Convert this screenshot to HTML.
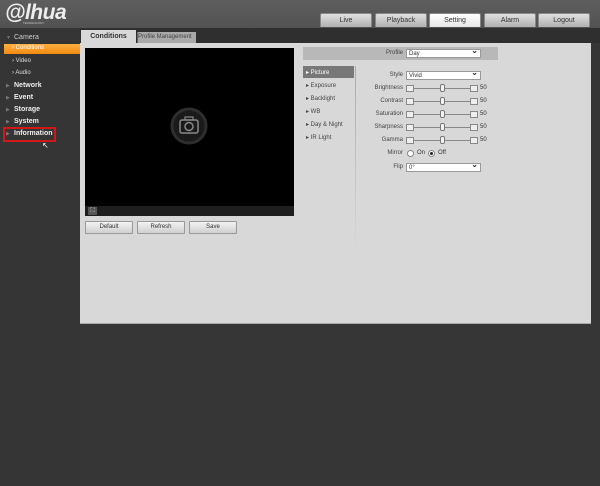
<!DOCTYPE html>
<html><head><style>
*{margin:0;padding:0;box-sizing:border-box}
body{width:600px;height:486px;background:#363636;font-family:"Liberation Sans",sans-serif;position:relative;overflow:hidden;font-size:7px;color:#333}
.a{position:absolute}
.hdr{left:0;top:0;width:600px;height:28px;background:linear-gradient(#5e5e5e,#525252)}
.logo{left:5px;top:1px;font-size:21px;font-weight:bold;font-style:italic;color:#eee;letter-spacing:-0.5px}
.tech{left:23px;top:21px;font-size:3px;color:#ccc}
.nt{top:13px;height:14px;width:52px;background:linear-gradient(#e0e0e0,#b0b0b0);border:1px solid #888;border-bottom:none;text-align:center;line-height:13px;font-size:7px;color:#333;border-radius:2px 2px 0 0}
.nt.on{background:linear-gradient(#fff,#e6e6e6)}
.sb{color:#eee;font-weight:bold;font-size:7px;left:14px}
.sbn{color:#ccc;font-size:7px}
.tri{position:absolute;left:6px;color:#777;font-size:5px}
.panel{left:80px;top:43px;width:511px;height:281px;background:#d8d8d8;border-bottom:1px solid #aaa}
.btn{top:221px;height:13px;width:48px;background:linear-gradient(#f2f2f2,#cfcfcf);border:1px solid #999;text-align:center;line-height:11px;font-size:6px;border-radius:1px}
.lbl{right:197px;font-size:6px;color:#444;text-align:right}
.sel{left:406px;width:75px;height:9px;background:#fff;border:1px solid #999;font-size:6px;line-height:8px;padding-left:2px}
.sel:after{content:"⌄";position:absolute;right:2px;top:-3px;font-size:8px;font-weight:bold}
.mb{width:8px;height:7px;border:1px solid #888;background:#eee}
.ln{height:1px;background:#888;left:414px;width:56px}
.th{left:440px;width:5px;height:8px;border:1px solid #777;background:#f4f4f4;border-radius:2px}
.menu{left:306px;font-size:6px;color:#444}
</style></head><body>
<div class="a hdr"></div>
<div class="a logo">@lhua</div>
<div class="a tech">TECHNOLOGY</div>
<div class="a nt" style="left:320px">Live</div>
<div class="a nt" style="left:375px">Playback</div>
<div class="a nt on" style="left:429px">Setting</div>
<div class="a nt" style="left:484px">Alarm</div>
<div class="a nt" style="left:538px">Logout</div>
<div class="a" style="left:0;top:28px;width:600px;height:15px;background:#2f2f2f"></div>
<div class="a" style="left:0;top:28px;width:80px;height:458px;background:#353535"></div>

<div class="a sbn" style="left:14px;top:34px">Camera</div><span class="tri" style="top:35px">▼</span>
<div class="a" style="left:4px;top:44px;width:76px;height:10px;background:linear-gradient(#ffb040,#f08a10)"></div>
<div class="a" style="left:12px;top:45px;color:#fff;font-size:6px">› Conditions</div>
<div class="a" style="left:12px;top:58px;color:#ddd;font-size:6px">› Video</div>
<div class="a" style="left:12px;top:70px;color:#ddd;font-size:6px">› Audio</div>
<div class="a sb" style="top:82px">Network</div><span class="tri" style="top:83px">▶</span>
<div class="a sb" style="top:94px">Event</div><span class="tri" style="top:95px">▶</span>
<div class="a sb" style="top:106px">Storage</div><span class="tri" style="top:107px">▶</span>
<div class="a sb" style="top:118px">System</div><span class="tri" style="top:119px">▶</span>
<div class="a sb" style="top:130px">Information</div><span class="tri" style="top:131px">▶</span>
<div class="a" style="left:3px;top:127px;width:53px;height:15px;border:2px solid #d01818"></div>
<div class="a" style="left:42px;top:141px;color:#fff;font-size:8px">↖</div>

<div class="a panel"></div>
<div class="a" style="left:81px;top:30px;width:55px;height:13px;background:#d8d8d8;text-align:center;line-height:13px;font-weight:bold;font-size:7px">Conditions</div>
<div class="a" style="left:137px;top:32px;width:59px;height:11px;background:#a9a9a9;line-height:11px;font-size:6px;color:#444;border-left:1px solid #666">Profile Management</div>

<div class="a" style="left:85px;top:48px;width:209px;height:168px;background:#000"></div>
<div class="a" style="left:85px;top:206px;width:209px;height:10px;background:#1e1e1e"></div>
<div class="a" style="left:88px;top:207px;width:9px;height:8px;background:#555;color:#ddd;font-size:6px;text-align:center;line-height:8px">⛶</div>
<svg class="a" style="left:170px;top:107px" width="38" height="38" viewBox="0 0 38 38"><circle cx="19" cy="19" r="17" fill="#1a1a1a" stroke="#2e2e2e" stroke-width="3"/><rect x="10" y="13" width="18" height="13" rx="2" fill="none" stroke="#888" stroke-width="1.5"/><rect x="15" y="10" width="8" height="3" fill="none" stroke="#888" stroke-width="1.2"/><circle cx="19" cy="19.5" r="4" fill="none" stroke="#888" stroke-width="1.5"/></svg>
<div class="a btn" style="left:85px">Default</div>
<div class="a btn" style="left:137px">Refresh</div>
<div class="a btn" style="left:189px">Save</div>

<div class="a" style="left:303px;top:47px;width:195px;height:13px;background:#b8b8b8"></div>
<div class="a lbl" style="top:50px">Profile</div>
<div class="a sel" style="top:49px">Day</div>
<div class="a" style="left:303px;top:66px;width:51px;height:12px;background:#787878"></div>
<div class="a menu" style="top:69px;color:#fff">▸ Picture</div>
<div class="a menu" style="top:82px">▸ Exposure</div>
<div class="a menu" style="top:95px">▸ Backlight</div>
<div class="a menu" style="top:108px">▸ WB</div>
<div class="a menu" style="top:121px">▸ Day &amp; Night</div>
<div class="a menu" style="top:134px">▸ IR Light</div>
<div class="a" style="left:355px;top:66px;width:1px;height:190px;background:linear-gradient(#aaa,#d8d8d8)"></div>

<div class="a lbl" style="top:72px">Style</div><div class="a sel" style="top:71px">Vivid</div>

<div class="a lbl" style="top:85px">Brightness</div>
<div class="a lbl" style="top:98px">Contrast</div>
<div class="a lbl" style="top:111px">Saturation</div>
<div class="a lbl" style="top:124px">Sharpness</div>
<div class="a lbl" style="top:137px">Gamma</div>

<div class="a mb" style="left:406px;top:85px"></div><div class="a ln" style="top:88px"></div><div class="a th" style="top:84px"></div><div class="a mb" style="left:470px;top:85px"></div><div class="a" style="left:480px;top:85px;font-size:6px">50</div>
<div class="a mb" style="left:406px;top:98px"></div><div class="a ln" style="top:101px"></div><div class="a th" style="top:97px"></div><div class="a mb" style="left:470px;top:98px"></div><div class="a" style="left:480px;top:98px;font-size:6px">50</div>
<div class="a mb" style="left:406px;top:111px"></div><div class="a ln" style="top:114px"></div><div class="a th" style="top:110px"></div><div class="a mb" style="left:470px;top:111px"></div><div class="a" style="left:480px;top:111px;font-size:6px">50</div>
<div class="a mb" style="left:406px;top:124px"></div><div class="a ln" style="top:127px"></div><div class="a th" style="top:123px"></div><div class="a mb" style="left:470px;top:124px"></div><div class="a" style="left:480px;top:124px;font-size:6px">50</div>
<div class="a mb" style="left:406px;top:137px"></div><div class="a ln" style="top:140px"></div><div class="a th" style="top:136px"></div><div class="a mb" style="left:470px;top:137px"></div><div class="a" style="left:480px;top:137px;font-size:6px">50</div>

<div class="a lbl" style="top:150px">Mirror</div>
<div class="a" style="left:407px;top:150px;width:7px;height:7px;border:1px solid #888;border-radius:50%;background:#fff"></div>
<div class="a" style="left:417px;top:150px;font-size:6px">On</div>
<div class="a" style="left:428px;top:150px;width:7px;height:7px;border:1px solid #888;border-radius:50%;background:#fff"><div style="width:3px;height:3px;background:#222;border-radius:50%;margin:1px"></div></div>
<div class="a" style="left:438px;top:150px;font-size:6px">Off</div>
<div class="a lbl" style="top:164px">Flip</div><div class="a sel" style="top:163px">0°</div>
</body></html>
